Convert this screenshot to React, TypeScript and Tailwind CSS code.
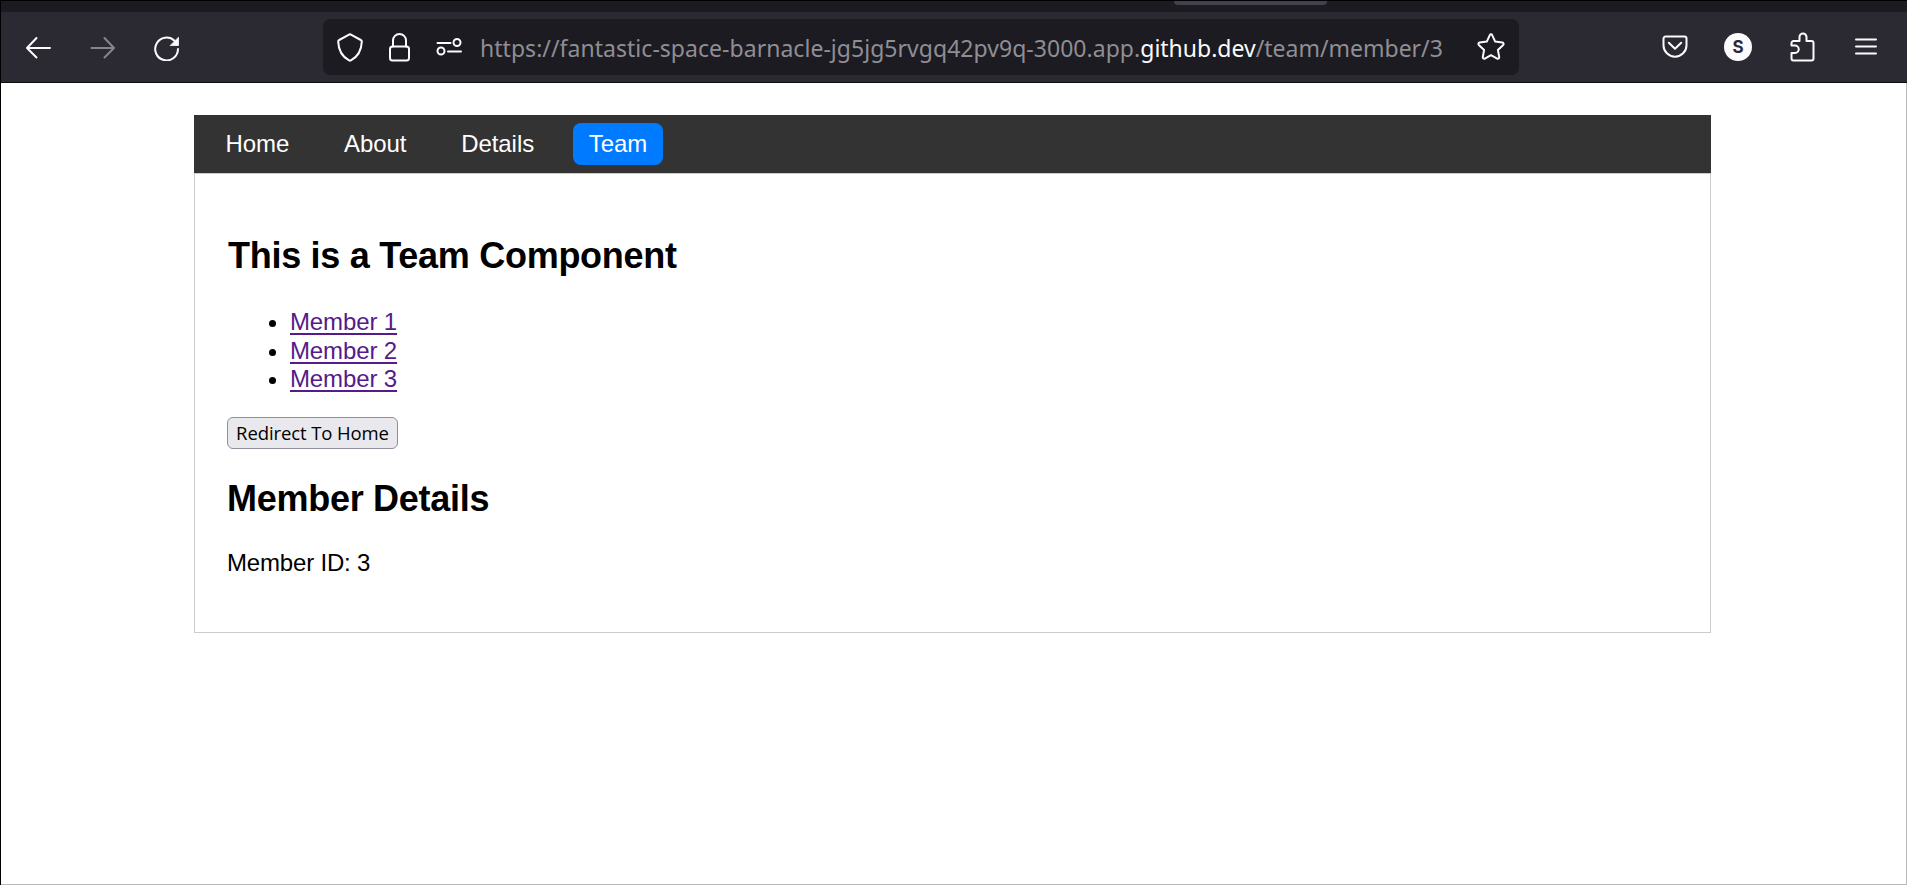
import React from 'react';

const stroke = {
  fill: 'none',
  stroke: 'currentColor',
  strokeWidth: 2,
  strokeLinecap: 'round' as const,
  strokeLinejoin: 'round' as const,
};

function Toolbar() {
  return (
    <div className="flex h-[70px] items-center bg-[#2b2a33] text-[#fbfbfe]">
      <div className="flex w-[322px] items-center pl-[23px]">
        <svg className="h-[28px] w-[28px]" viewBox="0 0 28 28" {...stroke}>
          <path d="M12.5 5 3 15l9.500 9.500M3 15h23" />
        </svg>
        <svg className="ml-[36px] h-[28px] w-[28px] text-[#86858b]" viewBox="0 0 28 28" {...stroke}>
          <path d="M16.500 5l9.500 10-9.500 9.500M26 15H3.500" />
        </svg>
        <svg className="ml-[36px] h-[28px] w-[28px]" viewBox="0 0 28 28" {...stroke}>
          <path d="M22.500 7.800a11.400 11.400 0 1 0 3.500 8.200" />
          <path d="M26.500 4.500v8h-8z" fill="currentColor" strokeWidth="0.8" />
        </svg>
      </div>

      <div className="flex h-[56px] w-[1196px] items-center rounded-[7px] bg-[#1c1b22]">
        <svg className="ml-[13px] h-[30px] w-[28px]" viewBox="0 0 28 30" {...stroke}>
          <path d="M14 2.200 24.800 8c.8.4 1 .8 1 1.600C25.500 18 22 24.600 14.900 28.400c-.6.3-1.200.3-1.800 0C6 24.600 2.500 18 2.200 9.600c0-.8.2-1.200 1-1.600z" />
        </svg>
        <svg className="ml-[24px] h-[30px] w-[24px]" viewBox="0 0 24 30" {...stroke}>
          <rect x="2" y="14.500" width="19" height="14" rx="2.500" />
          <path d="M5 14.500V8.500a6.500 6.500 0 0 1 13 0v6" />
        </svg>
        <svg className="ml-[23px] h-[30px] w-[28px]" viewBox="0 0 28 30" {...stroke}>
          <path d="M2.500 11h13M13 19.500h13" />
          <circle cx="22" cy="10.500" r="3.500" />
          <circle cx="6" cy="19" r="3.500" />
        </svg>
        <div className="ml-[17px] w-[986px] whitespace-nowrap pt-[2px] font-['Noto_Sans',sans-serif] text-[23px] leading-[30px] text-[#8f8e94]">
          <span className="tracking-[0.035px]">https://fantastic-space-barnacle-jg5jg5rvgq42pv9q-3000.app.</span>
          <span className="text-[#fbfbfe]">github.dev</span>
          <span>/team/member/3</span>
        </div>
        <svg className="ml-[10px] h-[30px] w-[30px]" viewBox="0 0 30 30" {...stroke}>
          <path d="M13.800 3.100c.5-1.100 1.900-1.100 2.400 0l3 6.500 7.200 1c1.200.2 1.600 1.500.8 2.300l-5.300 5 1.300 7.200c.2 1.200-1 2-2 1.500L15 23.200l-6.200 3.400c-1 .5-2.200-.3-2-1.500l1.300-7.200-5.300-5c-.8-.8-.4-2.100.8-2.300l7.200-1z" />
        </svg>
      </div>

      <div className="flex items-center pl-[142px]">
        <svg className="h-[28px] w-[28px]" viewBox="0 0 28 28" {...stroke}>
          <path d="M4.500 3.500h19a2 2 0 0 1 2 2v6.700a11.500 11.500 0 0 1-23 0V5.500a2 2 0 0 1 2-2z" />
          <path d="m7.800 9.800 6.200 6 6.200-6" />
        </svg>
        <div className="ml-[35px] flex h-[28px] w-[28px] items-center justify-center rounded-full bg-[#fbfbfe] font-['Inter',sans-serif] text-[17px] font-bold leading-none text-[#2b2a33]">
          S
        </div>
        <svg className="ml-[37px] h-[30px] w-[28px]" viewBox="0 0 28 30" {...stroke}>
          <path d="M10.500 9V5a3.500 3.500 0 0 1 7 0v4h5a2 2 0 0 1 2 2v15.500a2 2 0 0 1-2 2h-18a2 2 0 0 1-2-2V21H6a3.700 3.700 0 0 0 0-7.500H2.500V11a2 2 0 0 1 2-2z" />
        </svg>
        <svg className="ml-[35px] h-[28px] w-[28px]" viewBox="0 0 28 28" {...stroke}>
          <path d="M4 6.500h20M4 13.500h20M4 20.500h20" />
        </svg>
      </div>
    </div>
  );
}

const links = ['Home', 'About', 'Details'];
const members = ['Member 1', 'Member 2', 'Member 3'];

export default function App() {
  return (
    <div className="flex h-[885px] w-[1907px] flex-col overflow-hidden border-l border-t border-black bg-white">
      <div className="h-[11px] bg-[#1c1b22]">
        <div className="ml-[1173px] h-[4px] w-[153px] rounded-b-[6px] bg-[#42414d]" />
      </div>
      <Toolbar />
      <div className="h-px bg-[#0c0c0d]" />

      <main className="flex-1 border-b border-r border-[#bbbbbb] pl-[193px] pt-[32px] font-['Liberation_Sans',Arial,sans-serif] text-[24px] leading-[28px] text-black">
        <nav className="flex h-[58px] w-[1517px] items-center gap-[22.67px] bg-[#333333] pl-[15.500px] tracking-[-0.05px] text-white">
          {links.map((l) => (
            <a key={l} className="px-4 py-[7px]">{l}</a>
          ))}
          <a className="rounded-[8px] bg-[#007bff] pl-4 pr-[15.500px] py-[7px]">Team</a>
        </nav>
        <section className="h-[460px] w-[1517px] border border-[#cccccc] pl-[32px] pt-[61px]">
          <h2 className="pl-px text-[36px] font-bold leading-[42px] tracking-[-0.28px]">This is a Team Component</h2>
          <ul className="mt-[31px] list-disc pl-[63px]">
            {members.map((m) => (
              <li key={m} className="h-[28.500px] tracking-[-0.12px]">
                <a className="text-[#551a8b] underline decoration-2 underline-offset-[3px]">{m}</a>
              </li>
            ))}
          </ul>
          <button className="mt-[23px] block h-[32px] w-[171px] whitespace-nowrap rounded-[6px] border border-[#8f8f9d] bg-[#e9e9ed] font-['Open_Sans',sans-serif] text-[18.500px] leading-[28px] tracking-[-0.1px]">
            Redirect To Home
          </button>
          <h2 className="mt-[29px] text-[36px] font-bold leading-[42px] tracking-[-0.28px]">Member Details</h2>
          <p className="mt-[29px] tracking-[-0.18px]">Member ID: 3</p>
        </section>
      </main>
    </div>
  );
}
